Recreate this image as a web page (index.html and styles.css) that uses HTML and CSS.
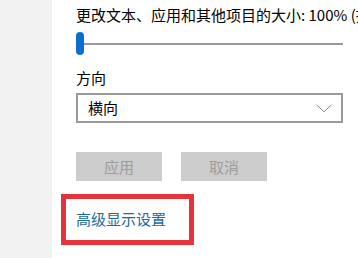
FILE: index.html
```html
<!DOCTYPE html>
<html lang="zh-CN">
<head>
<meta charset="utf-8">
<link rel="stylesheet" href="styles.css">
</head>
<body>
<div class="page">
  <aside class="side"></aside>
  <main class="main">
    <div class="title">更改文本、应用和其他项目的大小: 100% (推荐)</div>
    <div class="slider">
      <div class="thumb"></div>
      <div class="track"></div>
    </div>
    <div class="label">方向</div>
    <div class="select">
      <span class="select-text">横向</span>
      <svg class="chev" width="16" height="9" viewBox="0 0 16 9"><path d="M0.5 0.8 L8 7.8 L15.5 0.8" fill="none" stroke="#888" stroke-width="1"/></svg>
    </div>
    <div class="buttons">
      <div class="btn">应用</div>
      <div class="btn">取消</div>
    </div>
    <div class="highlight">
      <a class="link">高级显示设置</a>
    </div>
  </main>
</div>
</body>
</html>
```
FILE: styles.css
```css
html, body {
  margin: 0;
  padding: 0;
  background: #ffffff;
}
body {
  font-family: "Noto Sans CJK SC", "Noto Sans", sans-serif;
  width: 358px;
  height: 258px;
  overflow: hidden;
}
.page {
  display: flex;
  height: 258px;
}
.side {
  width: 52px;
  flex: none;
  background: #f2f2f2;
}
.main {
  flex: 1;
  min-width: 0;
  padding-left: 24px;
  overflow: hidden;
}
.title {
  margin-top: 5px;
  font-size: 15px;
  line-height: 20px;
  color: #000;
  white-space: nowrap;
}
.slider {
  margin-top: 7px;
  height: 23px;
  width: 267px;
  display: flex;
  align-items: center;
}
.thumb {
  width: 8px;
  height: 23px;
  border-radius: 4px;
  background: #0a6fd0;
  flex: none;
}
.track {
  flex: 1;
  height: 2px;
  background: #9a9a9a;
}
.label {
  margin-top: 13px;
  font-size: 15px;
  line-height: 20px;
  color: #000;
}
.select {
  margin-top: 5px;
  width: 267px;
  height: 30px;
  box-sizing: border-box;
  border: 2px solid #9a9a9a;
  display: flex;
  align-items: center;
  justify-content: space-between;
  padding: 0 9px 0 10px;
}
.select-text {
  font-size: 15px;
  line-height: 20px;
  color: #000;
}
.chev {
  display: block;
}
.buttons {
  margin-top: 29px;
  display: flex;
  gap: 19px;
}
.btn {
  width: 86px;
  height: 29px;
  background: #cccccc;
  color: #9c9c9c;
  font-size: 15px;
  line-height: 29px;
  text-align: center;
}
.highlight {
  margin-top: 13px;
  margin-left: -15px;
  width: 133px;
  height: 51px;
  box-sizing: border-box;
  border: 5px solid #e5333a;
  padding: 7px 0 0 10px;
}
.link {
  font-size: 15px;
  line-height: 20px;
  color: #1d6a98;
  text-decoration: none;
}
```
